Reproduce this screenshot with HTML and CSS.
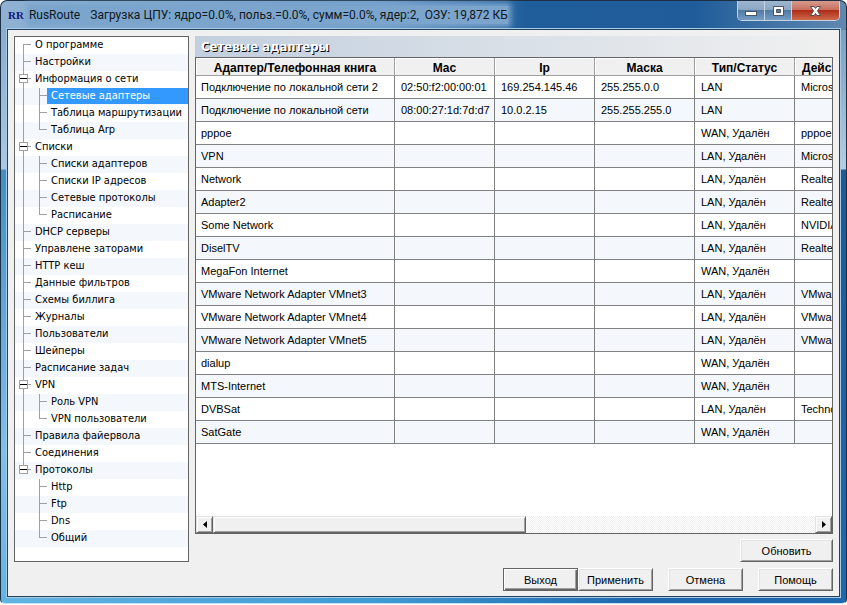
FILE: index.html
```html
<!DOCTYPE html>
<html lang="ru">
  <head>
    <meta charset="UTF-8" />
    <title>RusRoute</title>
    <link rel="stylesheet" href="styles.css">
  </head>
  <body>
    <div class="window">
      <!-- Title bar -->
      <header class="title-bar">
        <span class="app-icon">RR</span>
        <h1 class="title"><span>RusRoute</span><span>Загрузка ЦПУ: ядро=0.0%, польз.=0.0%, сумм=0.0%, ядер:2,&nbsp; ОЗУ: 19,872 КБ</span></h1>
        <div class="window-buttons">
          <button type="button" class="win-btn" aria-label="Свернуть">
            <svg width="13" height="12" viewBox="0 0 13 12"><rect x="0.5" y="6.5" width="11" height="4" fill="#fff" stroke="#4a5568" /></svg>
          </button>
          <button type="button" class="win-btn" aria-label="Развернуть">
            <svg width="13" height="12" viewBox="0 0 13 12"><path d="M1.500 1.500h10v9h-10zM4.500 4.500h4v3h-4z" fill="#fff" fill-rule="evenodd" stroke="#4a5568" /></svg>
          </button>
          <button type="button" class="win-btn close" aria-label="Закрыть">
            <svg width="13" height="12" viewBox="0 0 13 12"><path d="M1.500 1.500h3.500l1.500 2 1.500-2h3.500l-3 4.500 3 4.500h-3.500l-1.500-2-1.500 2h-3.500l3-4.500z" fill="#fff" stroke="#5a4a52" /></svg>
          </button>
        </div>
      </header>

      <main class="client">
        <!-- Navigation tree -->
        <nav class="tree">
          <ul class="tree-list">
            <li><div class="node"><a href="#">О программе</a></div></li>
            <li><div class="node"><a href="#">Настройки</a></div></li>
            <li>
              <div class="node"><button type="button" class="toggle" aria-label="Свернуть ветку"></button><a href="#">Информация о сети</a></div>
              <ul>
                <li><div class="node"><a href="#" class="selected">Сетевые адаптеры</a></div></li>
                <li><div class="node"><a href="#">Таблица маршрутизации</a></div></li>
                <li><div class="node"><a href="#">Таблица Arp</a></div></li>
              </ul>
            </li>
            <li>
              <div class="node"><button type="button" class="toggle" aria-label="Свернуть ветку"></button><a href="#">Списки</a></div>
              <ul>
                <li><div class="node"><a href="#">Списки адаптеров</a></div></li>
                <li><div class="node"><a href="#">Списки IP адресов</a></div></li>
                <li><div class="node"><a href="#">Сетевые протоколы</a></div></li>
                <li><div class="node"><a href="#">Расписание</a></div></li>
              </ul>
            </li>
            <li><div class="node"><a href="#">DHCP серверы</a></div></li>
            <li><div class="node"><a href="#">Управлене заторами</a></div></li>
            <li><div class="node"><a href="#">HTTP кеш</a></div></li>
            <li><div class="node"><a href="#">Данные фильтров</a></div></li>
            <li><div class="node"><a href="#">Схемы биллига</a></div></li>
            <li><div class="node"><a href="#">Журналы</a></div></li>
            <li><div class="node"><a href="#">Пользователи</a></div></li>
            <li><div class="node"><a href="#">Шейперы</a></div></li>
            <li><div class="node"><a href="#">Расписание задач</a></div></li>
            <li>
              <div class="node"><button type="button" class="toggle" aria-label="Свернуть ветку"></button><a href="#">VPN</a></div>
              <ul>
                <li><div class="node"><a href="#">Роль VPN</a></div></li>
                <li><div class="node"><a href="#">VPN пользователи</a></div></li>
              </ul>
            </li>
            <li><div class="node"><a href="#">Правила файервола</a></div></li>
            <li><div class="node"><a href="#">Соединения</a></div></li>
            <li>
              <div class="node"><button type="button" class="toggle" aria-label="Свернуть ветку"></button><a href="#">Протоколы</a></div>
              <ul>
                <li><div class="node"><a href="#">Http</a></div></li>
                <li><div class="node"><a href="#">Ftp</a></div></li>
                <li><div class="node"><a href="#">Dns</a></div></li>
                <li><div class="node"><a href="#">Общий</a></div></li>
              </ul>
            </li>
          </ul>
        </nav>

        <!-- Adapter list -->
        <section class="adapters">
          <h2 class="section-title">Сетевые адаптеры</h2>
          <div class="grid-box">
            <div class="grid-scroll">
              <table class="grid">
                <colgroup>
                  <col class="col-name"><col class="col-mid"><col class="col-mid"><col class="col-mid"><col class="col-mid"><col class="col-mid">
                </colgroup>
                <thead>
                  <tr><th>Адаптер/Телефонная книга</th><th>Mac</th><th>Ip</th><th>Маска</th><th>Тип/Статус</th><th class="clipped">Действие</th></tr>
                </thead>
                <tbody>
                  <tr><td>Подключение по локальной сети 2</td><td>02:50:f2:00:00:01</td><td>169.254.145.46</td><td>255.255.0.0</td><td>LAN</td><td>Microsoft</td></tr>
                  <tr><td>Подключение по локальной сети</td><td>08:00:27:1d:7d:d7</td><td>10.0.2.15</td><td>255.255.255.0</td><td>LAN</td><td></td></tr>
                  <tr><td>pppoe</td><td></td><td></td><td></td><td>WAN, Удалён</td><td>pppoe</td></tr>
                  <tr><td>VPN</td><td></td><td></td><td></td><td>LAN, Удалён</td><td>Microsoft</td></tr>
                  <tr><td>Network</td><td></td><td></td><td></td><td>LAN, Удалён</td><td>Realtek</td></tr>
                  <tr><td>Adapter2</td><td></td><td></td><td></td><td>LAN, Удалён</td><td>Realtek</td></tr>
                  <tr><td>Some Network</td><td></td><td></td><td></td><td>LAN, Удалён</td><td>NVIDIA</td></tr>
                  <tr><td>DiselTV</td><td></td><td></td><td></td><td>LAN, Удалён</td><td>Realtek</td></tr>
                  <tr><td>MegaFon Internet</td><td></td><td></td><td></td><td>WAN, Удалён</td><td></td></tr>
                  <tr><td>VMware Network Adapter VMnet3</td><td></td><td></td><td></td><td>LAN, Удалён</td><td>VMware</td></tr>
                  <tr><td>VMware Network Adapter VMnet4</td><td></td><td></td><td></td><td>LAN, Удалён</td><td>VMware</td></tr>
                  <tr><td>VMware Network Adapter VMnet5</td><td></td><td></td><td></td><td>LAN, Удалён</td><td>VMware</td></tr>
                  <tr><td>dialup</td><td></td><td></td><td></td><td>WAN, Удалён</td><td></td></tr>
                  <tr><td>MTS-Internet</td><td></td><td></td><td></td><td>WAN, Удалён</td><td></td></tr>
                  <tr><td>DVBSat</td><td></td><td></td><td></td><td>LAN, Удалён</td><td>TechnoTrend</td></tr>
                  <tr><td>SatGate</td><td></td><td></td><td></td><td>WAN, Удалён</td><td></td></tr>
                </tbody>
              </table>
            </div>
            <div class="scrollbar">
              <button type="button" class="scroll-btn" aria-label="Влево"><svg width="4" height="7" viewBox="0 0 4 7"><path d="M4 0v7L0 3.500z" /></svg></button>
              <div class="scroll-track"><div class="scroll-thumb"></div></div>
              <button type="button" class="scroll-btn" aria-label="Вправо"><svg width="4" height="7" viewBox="0 0 4 7"><path d="M0 0v7l4-3.500z" /></svg></button>
            </div>
          </div>
          <div class="refresh-row">
            <button type="button" class="btn wide">Обновить</button>
          </div>
        </section>

        <!-- Dialog buttons -->
        <div class="dialog-buttons">
          <div class="btn-pair">
            <button type="button" class="btn default">Выход</button>
            <button type="button" class="btn">Применить</button>
          </div>
          <button type="button" class="btn">Отмена</button>
          <button type="button" class="btn">Помощь</button>
        </div>
      </main>
    </div>
  </body>
</html>
```
FILE: styles.css
```css
* {
  margin: 0;
  padding: 0;
  box-sizing: border-box;
}

body {
  font-family: "Liberation Sans", Arial, sans-serif;
  font-size: 11px;
  color: #000;
  background-color: #fff;
  height: 100vh;
  padding-bottom: 1px;
  overflow: hidden;
}

button {
  font: inherit;
  color: inherit;
}

/* --- Window frame --- */
.window {
  display: flex;
  flex-direction: column;
  height: 100%;
  padding: 0 6px 6px;
  border: 1px solid #1c2f45;
  border-bottom-color: #c4e4f4;
  border-radius: 7px 7px 5px 5px;
  background:
    linear-gradient(to right, #8fb2d3 0, #6f9cc8 45%, #205e9b 62%, #1f5c99 82%, #6088b0 100%) top / 100% 29px no-repeat,
    linear-gradient(to right, #62b4e2 0, #3f9ad4 45%, #1f68b0 75%, #1f68ae 100%) bottom / 100% 7px no-repeat,
    linear-gradient(#82a5ca 0, #a9c9e4 168px, #3f8fc8 169px, #7cc2e8 75%, #62b4e2 100%) left / 50% 100% no-repeat,
    linear-gradient(#6f95bb 0, #b6cce0 168px, #1d5a97 169px, #2068ae 100%) right / 50% 100% no-repeat;
}

/* --- Title bar --- */
.title-bar {
  display: flex;
  align-items: center;
  height: 28px;
  flex: none;
}
.app-icon {
  font-family: "Liberation Serif", serif;
  font-size: 11px;
  font-weight: bold;
  color: #14147c;
  padding: 0 5px 0 1px;
}
.title {
  display: flex;
  gap: 10px;
  font-family: Roboto, "Segoe UI", sans-serif;
  font-size: 12px;
  font-weight: normal;
  line-height: 18px;
  color: #101820;
  background-color: #7ba5cd;
  box-shadow: 0 0 6px 3px #7ba5cd;
  white-space: nowrap;
}
.window-buttons {
  display: flex;
  align-self: flex-start;
  margin-left: auto;
  border: 1px solid #c3d3e2;
  border-top: none;
  border-radius: 0 0 5px 5px;
  overflow: hidden;
}
.win-btn {
  display: flex;
  align-items: center;
  justify-content: center;
  width: 27px;
  height: 19px;
  border: none;
  border-right: 1px solid #c3d3e2;
  background: linear-gradient(#9fb6cf 0, #8ba7c4 45%, #4f7ba6 50%, #769dc3 100%);
}
.win-btn.close {
  width: 47px;
  border-right: none;
  background: linear-gradient(#d69a8e 0, #c9705f 45%, #ad2c14 50%, #cf6a4c 100%);
}

/* --- Client area --- */
.client {
  flex: 1;
  display: grid;
  grid-template-columns: 175px 1fr;
  grid-template-rows: 1fr auto;
  column-gap: 6px;
  min-height: 0;
  padding: 6px 6px 5px;
  border: 1px solid #24425f;
  background-color: #f0f0f0;
  box-shadow: 0 0 0 1px #a6cbe3;
}

/* --- Tree --- */
.tree {
  border: 1px solid #646464;
  background-color: #fff;
  font-family: "DejaVu Sans Condensed", Tahoma, sans-serif;
  overflow: hidden;
}
.tree ul {
  list-style: none;
}
.tree-list {
  background: repeating-linear-gradient(#fff 0, #fff 17px, #f4f8fd 17px, #f4f8fd 34px);
}
.tree li {
  background:
    linear-gradient(#a0a0a0, #a0a0a0) 8px 0 / 1px 100% no-repeat,
    linear-gradient(#a0a0a0, #a0a0a0) 8px 7px / 8px 1px no-repeat;
}
.tree li:last-child {
  background-size: 1px 8px, 8px 1px;
}
.tree-list > li:first-child {
  background-position: 8px 7px, 8px 7px;
}
.tree li ul {
  margin-left: 16px;
}
.node {
  display: flex;
  align-items: flex-start;
  height: 17px;
  padding-left: 16px;
}
.node a {
  flex: 1;
  padding-left: 4px;
  line-height: 16px;
  color: #000;
  text-decoration: none;
  white-space: nowrap;
}
.node a.selected {
  background-color: #3399ff;
  color: #fff;
}
.toggle {
  width: 9px;
  height: 9px;
  margin: 3px 3px 0 -12px;
  border: 1px solid #a0a0a0;
  background: linear-gradient(#000, #000) center / 7px 1px no-repeat #fff;
}

/* --- Adapter list --- */
.adapters {
  display: flex;
  flex-direction: column;
  min-width: 0;
}
.section-title {
  height: 21px;
  padding-left: 6px;
  font-family: "DejaVu Sans Condensed", Tahoma, sans-serif;
  font-size: 13px;
  line-height: 22px;
  color: #fff;
  text-shadow: 1px 1px 0 #000;
  background: linear-gradient(to right, #c2cfde, #f0f0f0);
}
.grid-box {
  flex: 1;
  display: flex;
  flex-direction: column;
  min-height: 0;
  border: 1px solid #646464;
  background-color: #fff;
}
.grid-scroll {
  flex: 1;
  min-height: 0;
  overflow: hidden;
}
.grid {
  width: 699px;
  table-layout: fixed;
  border-collapse: separate;
  border-spacing: 0;
}
.col-name {
  width: 199px;
}
.col-mid {
  width: 100px;
}
.grid th {
  height: 18px;
  padding-top: 3px;
  border-right: 1px solid #a0a0a0;
  border-bottom: 1px solid #a0a0a0;
  background-color: #f0f0f0;
  box-shadow: inset 1px 1px 0 #fff;
  font-size: 12px;
  line-height: 14px;
}
.grid th.clipped {
  padding-left: 7px;
  text-align: left;
}
.grid td {
  height: 23px;
  padding: 0 5px;
  border-right: 1px solid #808080;
  border-bottom: 1px solid #808080;
  line-height: 22px;
  white-space: nowrap;
}
.grid td + td {
  padding: 0 0 0 6px;
}
.grid td:nth-child(2) {
  box-shadow: inset 1px 0 0 #fff;
}
.grid tbody tr:nth-child(even) {
  background-color: #f4f8fd;
}

/* --- Scroll bar --- */
.scrollbar {
  display: flex;
  height: 17px;
}
.scroll-btn,
.scroll-thumb {
  border: 1px solid;
  border-color: #e3e3e3 #646464 #646464 #e3e3e3;
  background-color: #f0f0f0;
  box-shadow: inset 1px 1px 0 #fff, inset -1px -1px 0 #a0a0a0;
}
.scroll-btn {
  display: flex;
  align-items: center;
  justify-content: center;
  width: 17px;
}
.scroll-track {
  flex: 1;
  background: repeating-conic-gradient(#fff 0 25%, #f0f0f0 0 50%) 0 0 / 2px 2px;
}
.scroll-thumb {
  width: 52%;
  height: 100%;
}

/* --- Buttons --- */
.btn {
  width: 75px;
  height: 23px;
  border: 1px solid;
  border-color: #fff #646464 #646464 #fff;
  background-color: #f0f0f0;
  box-shadow: inset 1px 1px 0 #e3e3e3, inset -1px -1px 0 #a0a0a0;
}
.btn.wide {
  width: 93px;
}
.btn.default {
  border-color: #646464;
  box-shadow: inset 1px 1px 0 #fff, inset -1px -1px 0 #646464, inset -2px -2px 0 #a0a0a0;
}
.refresh-row {
  display: flex;
  justify-content: flex-end;
  padding-top: 5px;
}
.dialog-buttons {
  grid-column: 1 / -1;
  display: flex;
  justify-content: flex-end;
  gap: 15px;
  padding-top: 6px;
}
.btn-pair {
  display: flex;
}
```
